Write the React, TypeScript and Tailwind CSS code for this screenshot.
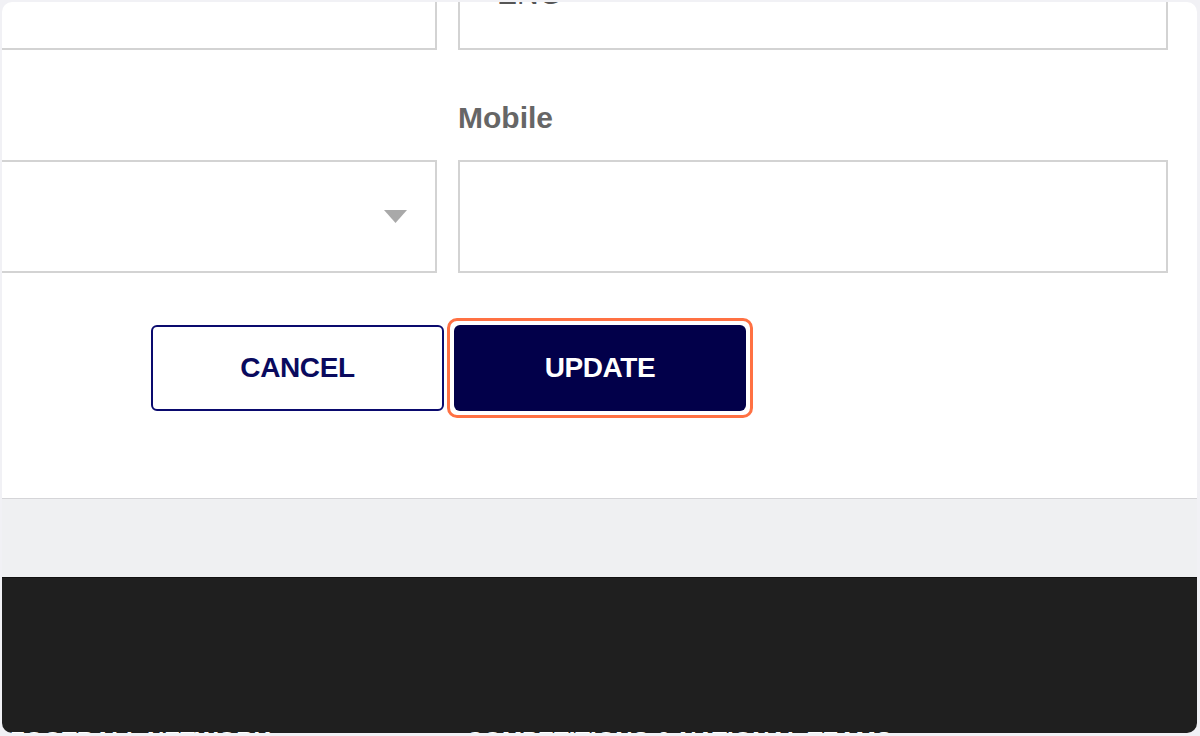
import React from "react";

const font = { fontFamily: '"Liberation Sans", Arial, sans-serif' };

function Caret() {
  return (
    <svg width="23" height="13" viewBox="0 0 23 13" className="block">
      <polygon points="0,0 23,0 11.5,13" fill="#a9a9a9" />
    </svg>
  );
}

export default function App() {
  return (
    <div
      className="w-[1200px] h-[736px] bg-[#f1f1f5] pt-[2px] pl-[2px] pr-[3px] pb-[3px] overflow-hidden"
      style={font}
    >
      <div className="h-full rounded-[10px] overflow-hidden bg-white flex flex-col">
        {/* white form section */}
        <div className="h-[497px] shrink-0 border-b border-[#d5d5d8] flex flex-col">
          <div className="grid grid-cols-[455px_710px] gap-x-[21px] ml-[-20px] mt-[-65px]">
            {/* row 1 */}
            <div className="h-[113px] border-2 border-[#d3d3d3] flex items-center justify-end pr-[28px]">
              <Caret />
            </div>
            <div className="h-[113px] border-2 border-[#d3d3d3] flex items-center pl-[37px]">
              <span className="text-[30px] leading-none text-[#555555]">ENG</span>
            </div>
            {/* row 2 labels */}
            <div />
            <div className="mt-[53px] mb-[27px] text-[30px] leading-none font-bold text-[#666666]">
              Mobile
            </div>
            {/* row 3 */}
            <div className="h-[113px] border-2 border-[#d3d3d3] flex items-center justify-end pr-[28px]">
              <Caret />
            </div>
            <div className="h-[113px] border-2 border-[#d3d3d3]" />
          </div>
          {/* buttons */}
          <div className="flex items-center mt-[45px] pl-[149px]">
            <button className="w-[293px] h-[86px] border-2 border-[#0a0a6e] rounded-[6px] bg-white text-[#0a0a5e] text-[28px] font-bold tracking-[-0.4px]">
              CANCEL
            </button>
            <div className="ml-[3px] border-[3px] border-[#ff7143] rounded-[10px] p-[4px]">
              <button className="w-[292px] h-[86px] rounded-[6px] bg-[#02004a] text-white text-[28px] font-bold tracking-[-0.4px] block">
                UPDATE
              </button>
            </div>
          </div>
        </div>
        {/* gray band */}
        <div className="h-[79px] shrink-0 bg-[#eff0f2] border-b border-[#111111]" />
        {/* dark footer */}
        <div className="flex-1 bg-[#1f1f1f] flex pt-[151px] text-white font-bold text-[24px] leading-none whitespace-nowrap">
          <div className="w-[464px] pl-[8px]">FOOTBALL NETWORK</div>
          <div>COMPETITIONS &amp; NATIONAL TEAMS</div>
        </div>
      </div>
    </div>
  );
}
